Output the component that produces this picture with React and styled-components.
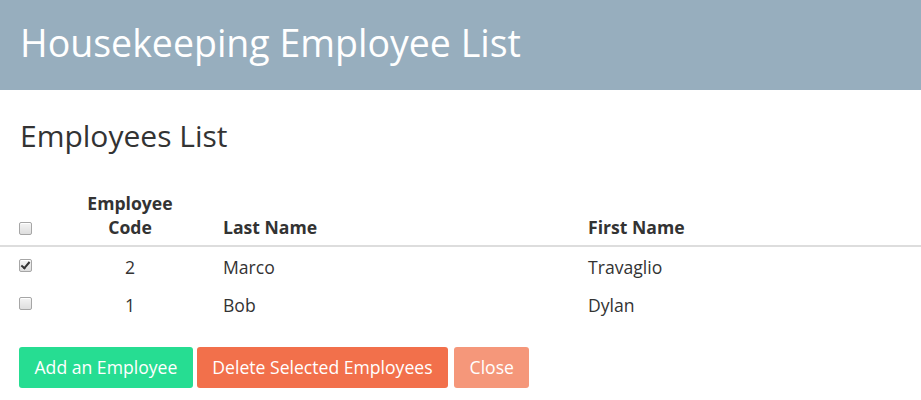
import React, { useState } from "react";
import styled, { createGlobalStyle } from "styled-components";

const Global = createGlobalStyle`
  html, body { margin: 0; padding: 0; background: #fff; }
  body { font-family: "Open Sans", "DejaVu Sans", sans-serif; color: #333; }
  * { box-sizing: border-box; }
`;

const Header = styled.header`
  height: 90px;
  background: #97aebe;
  display: flex;
  align-items: center;
  padding: 0 20px 4px;
`;

const Title = styled.h1`
  margin: 0;
  font-size: 37.5px;
  font-weight: 400;
  color: #fff;
  line-height: 1;
`;

const SubTitle = styled.h2`
  margin: 28px 20px 29px;
  font-size: 30px;
  font-weight: 400;
  line-height: 36px;
  color: #333;
`;

const Table = styled.table`
  width: 100%;
  border-collapse: collapse;
  table-layout: fixed;
  font-size: 17.6px;
`;

const Th = styled.th`
  text-align: ${(p) => p.$align || "left"};
  vertical-align: bottom;
  font-weight: 700;
  line-height: 24px;
  padding: 8px ${(p) => p.$px || 8}px 6px;
  border-bottom: 2px solid #ddd;
  color: #333;
`;

const Td = styled.td`
  text-align: ${(p) => p.$align || "left"};
  vertical-align: middle;
  line-height: 22px;
  padding: 9px 8px 7px;
  color: #333;
`;

const CheckCell = styled.td`
  padding: 7px 0 9px 19px;
  vertical-align: middle;
  line-height: 22px;
`;

const CheckHead = styled.th`
  padding: 8px 0 10px 19px;
  vertical-align: bottom;
  text-align: left;
  border-bottom: 2px solid #ddd;
  line-height: 13px;
`;

const Check = styled.input.attrs({ type: "checkbox" })`
  appearance: none;
  -webkit-appearance: none;
  display: block;
  position: relative;
  margin: 0;
  width: 13px;
  height: 13px;
  border: 1px solid #a6a6a6;
  border-radius: 2px;
  background: linear-gradient(#f4f4f4, #dedede);
  box-shadow: inset 0 1px 0 #fff;
  cursor: pointer;

  &:checked::after {
    content: "";
    position: absolute;
    left: 3px;
    top: 0px;
    width: 3px;
    height: 7px;
    border: solid #333;
    border-width: 0 2px 2px 0;
    transform: rotate(40deg);
  }
`;

const Actions = styled.div`
  display: flex;
  padding: 24px 19px 0;
`;

const Button = styled.button`
  font-family: inherit;
  font-size: 17.6px;
  line-height: 25px;
  padding: 8px 15.5px;
  border: none;
  border-radius: 3px;
  color: #fff;
  background: ${(p) => p.$bg};
  margin-left: ${(p) => p.$ml || 0}px;
  cursor: pointer;
`;

const employees = [
  { code: 2, last: "Marco", first: "Travaglio", checked: true },
  { code: 1, last: "Bob", first: "Dylan", checked: false },
];

export default function App() {
  const [rows, setRows] = useState(employees);
  return (
    <>
      <Global />
      <Header>
        <Title>Housekeeping Employee List</Title>
      </Header>
      <SubTitle>Employees List</SubTitle>
      <Table>
        <colgroup>
          <col style={{ width: 45 }} />
          <col style={{ width: 170 }} />
          <col style={{ width: 365 }} />
          <col />
        </colgroup>
        <thead>
          <tr>
            <CheckHead>
              <Check readOnly />
            </CheckHead>
            <Th $align="center" $px={30}>Employee Code</Th>
            <Th>Last Name</Th>
            <Th>First Name</Th>
          </tr>
        </thead>
        <tbody>
          {rows.map((r, i) => (
            <tr key={r.code}>
              <CheckCell>
                <Check
                  checked={r.checked}
                  onChange={() =>
                    setRows(rows.map((x, j) => (j === i ? { ...x, checked: !x.checked } : x)))
                  }
                />
              </CheckCell>
              <Td $align="center">{r.code}</Td>
              <Td>{r.last}</Td>
              <Td>{r.first}</Td>
            </tr>
          ))}
        </tbody>
      </Table>
      <Actions>
        <Button $bg="#26dd92">Add an Employee</Button>
        <Button $bg="#f2704b" $ml={4}>Delete Selected Employees</Button>
        <Button $bg="#f5977a" $ml={6}>Close</Button>
      </Actions>
    </>
  );
}
